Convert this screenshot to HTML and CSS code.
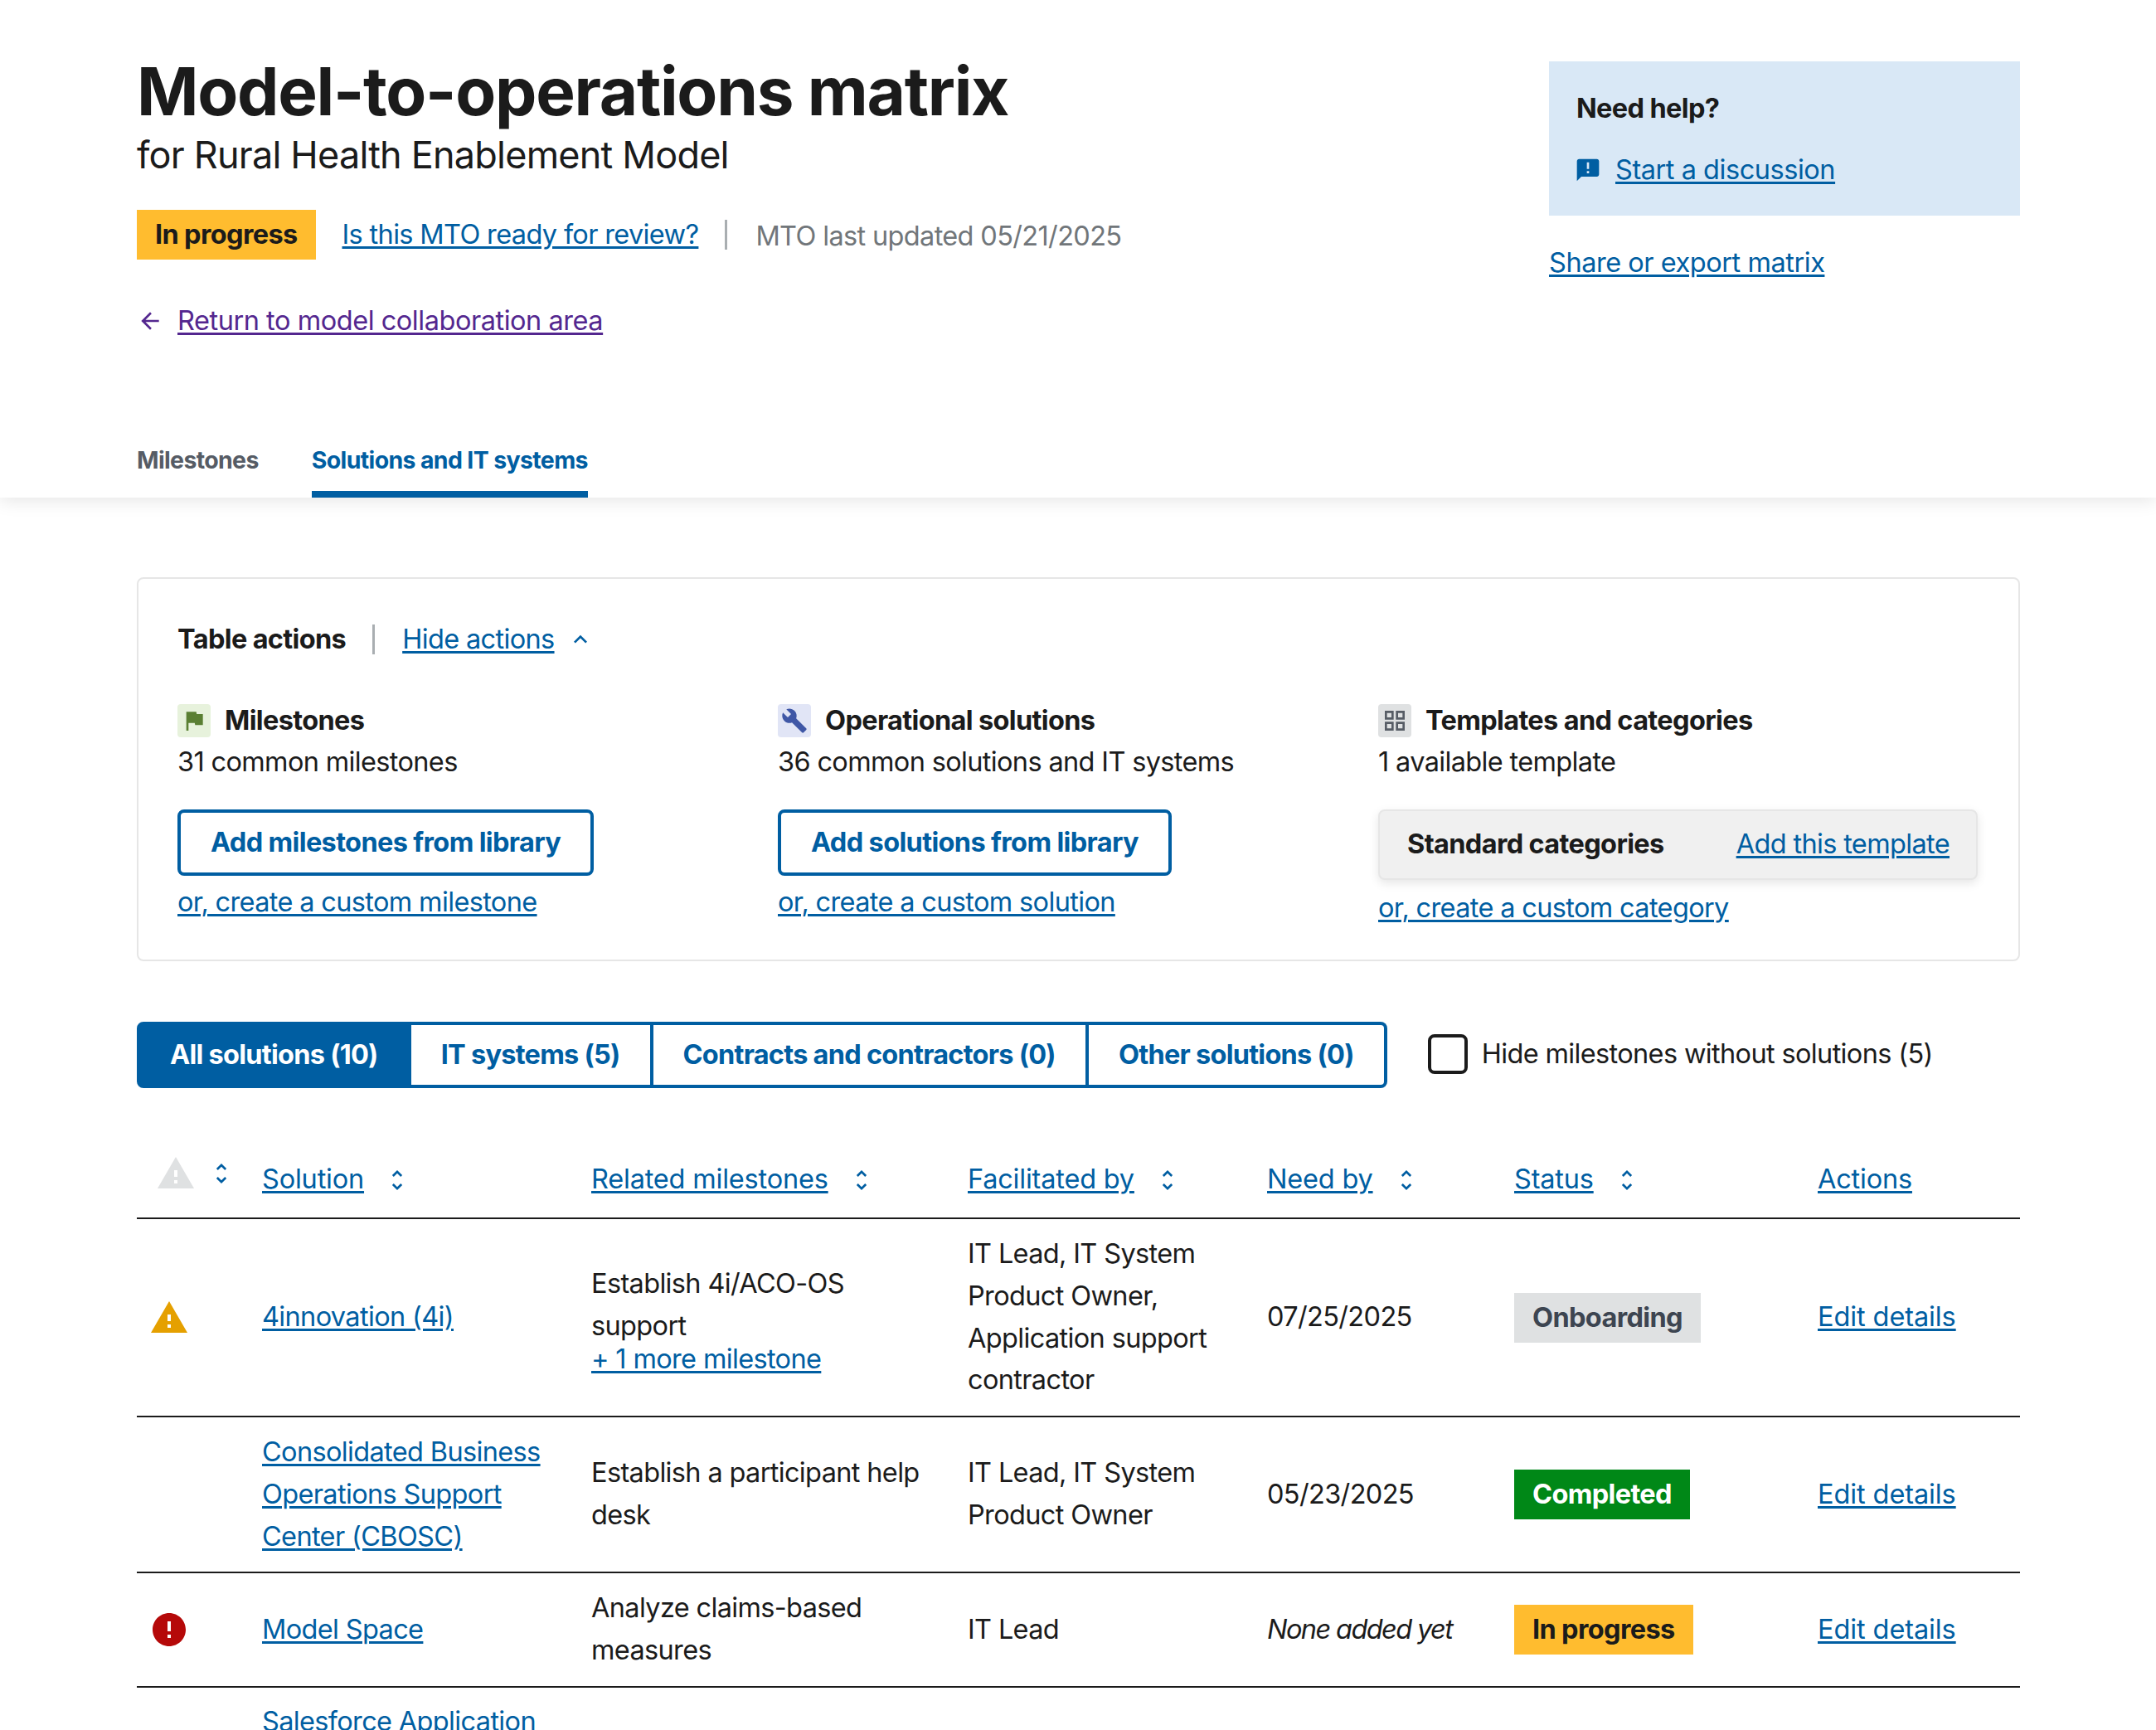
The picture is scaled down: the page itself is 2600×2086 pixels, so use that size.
FILE: index.html
```html
<!DOCTYPE html>
<html lang="en">
<head>
    <meta charset="UTF-8">
    <title>Model-to-operations matrix</title>
    <link rel="stylesheet" href="styles.css">
</head>
<body>
    <header class="page-head">
        <div class="head-top">
            <div class="head-main">
                <h1>Model-to-operations matrix</h1>
                <p class="subtitle">for Rural Health Enablement Model</p>
                <div class="status-row">
                    <span class="tag tag-progress">In progress</span>
                    <a href="#" class="review-link">Is this MTO ready for review?</a>
                    <span class="divider"></span>
                    <span class="updated">MTO last updated 05/21/2025</span>
                </div>
                <div class="back-row">
                    <svg class="icon-32" viewBox="0 0 24 24"><path d="M20 11H7.83l5.59-5.59L12 4l-8 8 8 8 1.41-1.41L7.83 13H20v-2z"/></svg>
                    <a href="#" class="back-link">Return to model collaboration area</a>
                </div>
            </div>
            <aside class="head-side">
                <div class="help-box">
                    <div class="help-title">Need help?</div>
                    <div class="help-link">
                        <svg class="icon-32" viewBox="0 0 24 24"><path d="M20 2H4c-1.1 0-1.99.9-1.99 2L2 22l4-4h14c1.1 0 2-.9 2-2V4c0-1.1-.9-2-2-2zm-7 9h-2V5h2v6zm0 4h-2v-2h2v2z"/></svg>
                        <a href="#">Start a discussion</a>
                    </div>
                </div>
                <a href="#" class="share-link">Share or export matrix</a>
            </aside>
        </div>
        <nav class="tabs">
            <a href="#" class="tab">Milestones</a>
            <a href="#" class="tab tab-active">Solutions and IT systems</a>
        </nav>
    </header>

    <main class="content">
        <section class="actions-card">
            <div class="actions-head">
                <strong>Table actions</strong>
                <span class="divider"></span>
                <a href="#">Hide actions</a>
                <svg class="icon-32 chevron" viewBox="0 0 24 24"><path d="M12 8l-6 6 1.41 1.41L12 10.83l4.59 4.58L18 14z"/></svg>
            </div>
            <div class="actions-grid">
                <div>
                    <div class="action-title">
                        <span class="icon-box box-green"><svg class="icon-32" viewBox="0 0 24 24"><path d="M14.4 6L14 4H5v17h2v-7h5.6l.4 2h7V6z"/></svg></span>
                        <strong>Milestones</strong>
                    </div>
                    <p class="action-sub">31 common milestones</p>
                    <a href="#" class="btn-outline">Add milestones from library</a>
                    <a href="#" class="custom-link">or, create a custom milestone</a>
                </div>
                <div>
                    <div class="action-title">
                        <span class="icon-box box-indigo"><svg class="icon-32" viewBox="0 0 24 24"><path d="M22.7 19l-9.1-9.1c.9-2.3.4-5-1.5-6.9-2-2-5-2.4-7.4-1.3L9 6 6 9 1.6 4.7C.4 7.1.9 10.1 2.9 12.1c1.9 1.9 4.6 2.4 6.9 1.5l9.1 9.1c.4.4 1 .4 1.4 0l2.3-2.3c.5-.4.5-1.1.1-1.4z"/></svg></span>
                        <strong>Operational solutions</strong>
                    </div>
                    <p class="action-sub">36 common solutions and IT systems</p>
                    <a href="#" class="btn-outline">Add solutions from library</a>
                    <a href="#" class="custom-link">or, create a custom solution</a>
                </div>
                <div>
                    <div class="action-title">
                        <span class="icon-box box-gray"><svg class="icon-32" viewBox="0 0 24 24"><path d="M3 3v8h8V3H3zm6 6H5V5h4v4zm-6 4v8h8v-8H3zm6 6H5v-4h4v4zm4-16v8h8V3h-8zm6 6h-4V5h4v4zm-6 4v8h8v-8h-8zm6 6h-4v-4h4v4z"/></svg></span>
                        <strong>Templates and categories</strong>
                    </div>
                    <p class="action-sub">1 available template</p>
                    <div class="template-card">
                        <strong>Standard categories</strong>
                        <a href="#">Add this template</a>
                    </div>
                    <a href="#" class="custom-link custom-link-wide">or, create a custom category</a>
                </div>
            </div>
        </section>

        <div class="filter-row">
            <div class="btn-group">
                <a href="#" class="seg seg-active">All solutions (10)</a>
                <a href="#" class="seg">IT systems (5)</a>
                <a href="#" class="seg">Contracts and contractors (0)</a>
                <a href="#" class="seg">Other solutions (0)</a>
            </div>
            <label class="check">
                <span class="check-box"></span>
                Hide milestones without solutions (5)
            </label>
        </div>

        <table class="matrix">
            <colgroup>
                <col class="col-alert">
                <col class="col-solution">
                <col class="col-related">
                <col class="col-facilitated">
                <col class="col-need">
                <col class="col-status">
                <col class="col-actions">
            </colgroup>
            <thead>
                <tr>
                    <th>
                        <div class="alert-head">
                            <svg class="icon-48 icon-muted" viewBox="0 0 24 24"><path d="M1 21h22L12 2 1 21zm12-3h-2v-2h2v2zm0-4h-2v-4h2v4z"/></svg>
                            <svg class="icon-32" viewBox="0 0 24 24"><path d="M12 5.83L15.17 9l1.41-1.41L12 3 7.41 7.59 8.83 9 12 5.83zm0 12.34L8.83 15l-1.41 1.41L12 21l4.59-4.59L15.17 15 12 18.17z"/></svg>
                        </div>
                    </th>
                    <th><div class="sort-head"><a href="#">Solution</a><svg class="icon-32" viewBox="0 0 24 24"><path d="M12 5.83L15.17 9l1.41-1.41L12 3 7.41 7.59 8.83 9 12 5.83zm0 12.34L8.83 15l-1.41 1.41L12 21l4.59-4.59L15.17 15 12 18.17z"/></svg></div></th>
                    <th><div class="sort-head"><a href="#">Related milestones</a><svg class="icon-32" viewBox="0 0 24 24"><path d="M12 5.83L15.17 9l1.41-1.41L12 3 7.41 7.59 8.83 9 12 5.83zm0 12.34L8.83 15l-1.41 1.41L12 21l4.59-4.59L15.17 15 12 18.17z"/></svg></div></th>
                    <th><div class="sort-head"><a href="#">Facilitated by</a><svg class="icon-32" viewBox="0 0 24 24"><path d="M12 5.83L15.17 9l1.41-1.41L12 3 7.41 7.59 8.83 9 12 5.83zm0 12.34L8.83 15l-1.41 1.41L12 21l4.59-4.59L15.17 15 12 18.17z"/></svg></div></th>
                    <th><div class="sort-head"><a href="#">Need by</a><svg class="icon-32" viewBox="0 0 24 24"><path d="M12 5.83L15.17 9l1.41-1.41L12 3 7.41 7.59 8.83 9 12 5.83zm0 12.34L8.83 15l-1.41 1.41L12 21l4.59-4.59L15.17 15 12 18.17z"/></svg></div></th>
                    <th><div class="sort-head"><a href="#">Status</a><svg class="icon-32" viewBox="0 0 24 24"><path d="M12 5.83L15.17 9l1.41-1.41L12 3 7.41 7.59 8.83 9 12 5.83zm0 12.34L8.83 15l-1.41 1.41L12 21l4.59-4.59L15.17 15 12 18.17z"/></svg></div></th>
                    <th><div class="sort-head"><a href="#">Actions</a></div></th>
                </tr>
            </thead>
            <tbody>
                <tr>
                    <td><svg class="icon-48 icon-warning" viewBox="0 0 24 24"><path d="M1 21h22L12 2 1 21zm12-3h-2v-2h2v2zm0-4h-2v-4h2v4z"/></svg></td>
                    <td><a href="#">4innovation (4i)</a></td>
                    <td>Establish 4i/ACO-OS support<a href="#" class="more-link">+ 1 more milestone</a></td>
                    <td>IT Lead, IT System Product Owner, Application support contractor</td>
                    <td>07/25/2025</td>
                    <td><span class="tag tag-onboarding">Onboarding</span></td>
                    <td><a href="#" class="edit-link">Edit details</a></td>
                </tr>
                <tr>
                    <td></td>
                    <td><a href="#">Consolidated Business Operations Support Center (CBOSC)</a></td>
                    <td>Establish a participant help desk</td>
                    <td>IT Lead, IT System Product Owner</td>
                    <td>05/23/2025</td>
                    <td><span class="tag tag-completed">Completed</span></td>
                    <td><a href="#" class="edit-link">Edit details</a></td>
                </tr>
                <tr>
                    <td><svg class="icon-48 icon-error" viewBox="0 0 24 24"><path d="M12 2C6.48 2 2 6.48 2 12s4.48 10 10 10 10-4.48 10-10S17.52 2 12 2zm1 15h-2v-2h2v2zm0-4h-2V7h2v6z"/></svg></td>
                    <td><a href="#">Model Space</a></td>
                    <td>Analyze claims-based measures</td>
                    <td>IT Lead</td>
                    <td><em class="empty">None added yet</em></td>
                    <td><span class="tag tag-progress">In progress</span></td>
                    <td><a href="#" class="edit-link">Edit details</a></td>
                </tr>
                <tr>
                    <td></td>
                    <td><a href="#">Salesforce Application Process Support</a></td>
                    <td></td>
                    <td></td>
                    <td></td>
                    <td></td>
                    <td></td>
                </tr>
            </tbody>
        </table>
    </main>
</body>
</html>
```

FILE: styles.css
```css
html,
body {
    height: 100%;
    overflow: hidden;
}

body {
    margin: 0;
    background-color: #fff;
    color: #1b1b1b;
    font-family: Inter, "Liberation Sans", sans-serif;
    font-size: 32.5px;
    line-height: 50.88px;
    letter-spacing: -0.02em;
}

a {
    color: #005ea2;
    text-decoration-thickness: 3px;
    text-underline-offset: 3px;
}

svg {
    display: block;
    flex: none;
    fill: currentColor;
}

.icon-32 {
    width: 32px;
    height: 32px;
}

.icon-48 {
    width: 48px;
    height: 48px;
}

/* page header */
.page-head {
    position: relative;
    height: 600px;
    box-sizing: border-box;
    padding: 0 164px 0 165px;
    box-shadow: 0 4px 20px rgba(0, 0, 0, 0.1);
}

.head-top {
    display: flex;
    justify-content: space-between;
    height: 514px;
}

h1 {
    margin: 62px 0 0;
    font-size: 80px;
    line-height: 96px;
    font-weight: 700;
    letter-spacing: -0.016em;
}

.subtitle {
    margin: 3px 0 0;
    font-size: 45px;
    line-height: 52px;
    letter-spacing: -0.0175em;
}

.status-row {
    display: flex;
    align-items: center;
    margin-top: 40px;
}

.tag {
    display: inline-block;
    height: 60px;
    padding: 0 22px;
    font-weight: 700;
    line-height: 60px;
}

.tag-progress {
    background-color: #ffbc2f;
}

.tag-onboarding {
    background-color: #dfe1e2;
    color: #3d4551;
}

.tag-completed {
    background-color: #008817;
    color: #fff;
}

.review-link {
    margin-left: 32px;
}

.divider {
    width: 3px;
    height: 36px;
    background-color: #a9aeb1;
}

.status-row .divider {
    margin: 0 34px 0 32px;
}

.updated {
    color: #71767a;
    margin-top: 4px;
}

.back-row {
    display: flex;
    align-items: center;
    gap: 17px;
    margin-top: 49px;
    color: #54278f;
}

.back-link {
    color: #54278f;
    letter-spacing: -0.46px;
}

.head-side {
    width: 568px;
    padding-top: 74px;
}

.help-box {
    height: 186px;
    box-sizing: border-box;
    padding: 32px 33px 0;
    background-color: #d9e8f6;
}

.help-title {
    font-weight: 700;
}

.help-link {
    display: flex;
    align-items: center;
    gap: 17px;
    margin-top: 23px;
    margin-left: -2px;
    color: #005ea2;
    letter-spacing: -0.46px;
}

.share-link {
    display: block;
    margin-top: 32px;
    letter-spacing: -0.46px;
}

.tabs {
    display: flex;
    gap: 64px;
}

.tab {
    height: 86px;
    box-sizing: border-box;
    border-bottom: 8px solid transparent;
    padding-top: 16px;
    color: #565c65;
    font-size: 28.5px;
    font-weight: 700;
    line-height: 50px;
    text-decoration: none;
}

.tab-active {
    border-bottom-color: #005ea2;
    color: #005ea2;
}

/* table actions */
.content {
    padding: 96px 164px 0 165px;
}

.actions-card {
    height: 463px;
    box-sizing: border-box;
    border: 2px solid #e6e6e6;
    border-radius: 8px;
    padding: 48px 48px 0 47px;
}

.actions-head {
    display: flex;
    align-items: center;
}

.actions-head strong,
.action-title strong,
.template-card strong {
    font-weight: 700;
}

.actions-head .divider {
    margin: 0 33px 0 32px;
}

.chevron {
    margin-left: 15px;
    color: #005ea2;
}

.actions-grid {
    display: grid;
    grid-template-columns: repeat(3, 1fr);
    margin-top: 47px;
}

.action-title {
    display: flex;
    align-items: center;
    gap: 17px;
}

.icon-box {
    display: flex;
    align-items: center;
    justify-content: center;
    width: 40px;
    height: 40px;
    border-radius: 4px;
}

.box-green {
    background-color: #e7f2dc;
    color: #5a7f33;
}

.box-indigo {
    background-color: #e1e5f6;
    color: #3f57a6;
}

.box-gray {
    background-color: #dfe1e2;
    color: #565c65;
}

.action-sub {
    margin: -1px 0 31px;
}

.btn-outline {
    display: inline-block;
    height: 80px;
    box-sizing: border-box;
    border: 4px solid #005ea2;
    border-radius: 8px;
    padding: 0 36px;
    font-weight: 700;
    line-height: 72px;
    text-decoration: none;
}

.custom-link {
    display: table;
    margin-top: 7px;
}

.custom-link-wide {
    margin-top: 9px;
}

.template-card {
    display: flex;
    justify-content: space-between;
    align-items: center;
    height: 85px;
    box-sizing: border-box;
    margin-right: 1px;
    border: 2px solid #e6e6e6;
    border-radius: 8px;
    padding: 0 32px 0 33px;
    background-color: #f0f0f0;
    box-shadow: 0 4px 12px rgba(0, 0, 0, 0.1);
}

/* filters */
.filter-row {
    display: flex;
    align-items: center;
    margin-top: 73px;
}

.btn-group {
    display: flex;
}

.seg {
    height: 80px;
    box-sizing: border-box;
    border: 4px solid #005ea2;
    border-left-width: 0;
    padding: 0 36px;
    font-weight: 700;
    line-height: 72px;
    letter-spacing: -0.74px;
    text-decoration: none;
}

.seg:first-child {
    border-left-width: 4px;
    border-radius: 8px 0 0 8px;
}

.seg:last-child {
    border-radius: 0 8px 8px 0;
}

.seg-active {
    background-color: #005ea2;
    color: #fff;
}

.check {
    display: flex;
    align-items: center;
    gap: 17px;
    margin-bottom: 2px;
    margin-left: 49px;
}

.check-box {
    width: 48px;
    height: 48px;
    box-sizing: border-box;
    border: 4px solid #1b1b1b;
    border-radius: 8px;
}

/* matrix table */
.matrix {
    width: 2271px;
    margin-top: 62px;
    border-collapse: separate;
    border-spacing: 0;
    table-layout: fixed;
}

.col-alert { width: 151px; }
.col-solution { width: 397px; }
.col-related { width: 454px; }
.col-facilitated { width: 361px; }
.col-need { width: 298px; }
.col-status { width: 366px; }
.col-actions { width: 244px; }

.matrix th {
    height: 94px;
    padding: 0;
    border-bottom: 2px solid #1b1b1b;
    font-weight: 400;
    text-align: left;
    vertical-align: middle;
}

.matrix td {
    padding: 16.8px 32px 16.8px 0;
    border-bottom: 2px solid #1b1b1b;
    vertical-align: middle;
}

.alert-head {
    display: flex;
    align-items: center;
    gap: 15px;
    margin-left: 23px;
    margin-bottom: 12px;
    color: #005ea2;
}

.sort-head {
    display: flex;
    align-items: center;
    gap: 24px;
    margin-top: 3px;
    color: #005ea2;
    letter-spacing: -0.2px;
}

.edit-link {
    letter-spacing: -0.1px;
}

.empty {
    letter-spacing: -1.6px;
}

.icon-muted {
    color: #dfe1e2;
}

.icon-warning {
    margin-left: 15px;
    color: #e5a000;
}

.icon-error {
    margin-left: 15px;
    color: #b50909;
}

.more-link {
    display: block;
    line-height: 30px;
}
```
